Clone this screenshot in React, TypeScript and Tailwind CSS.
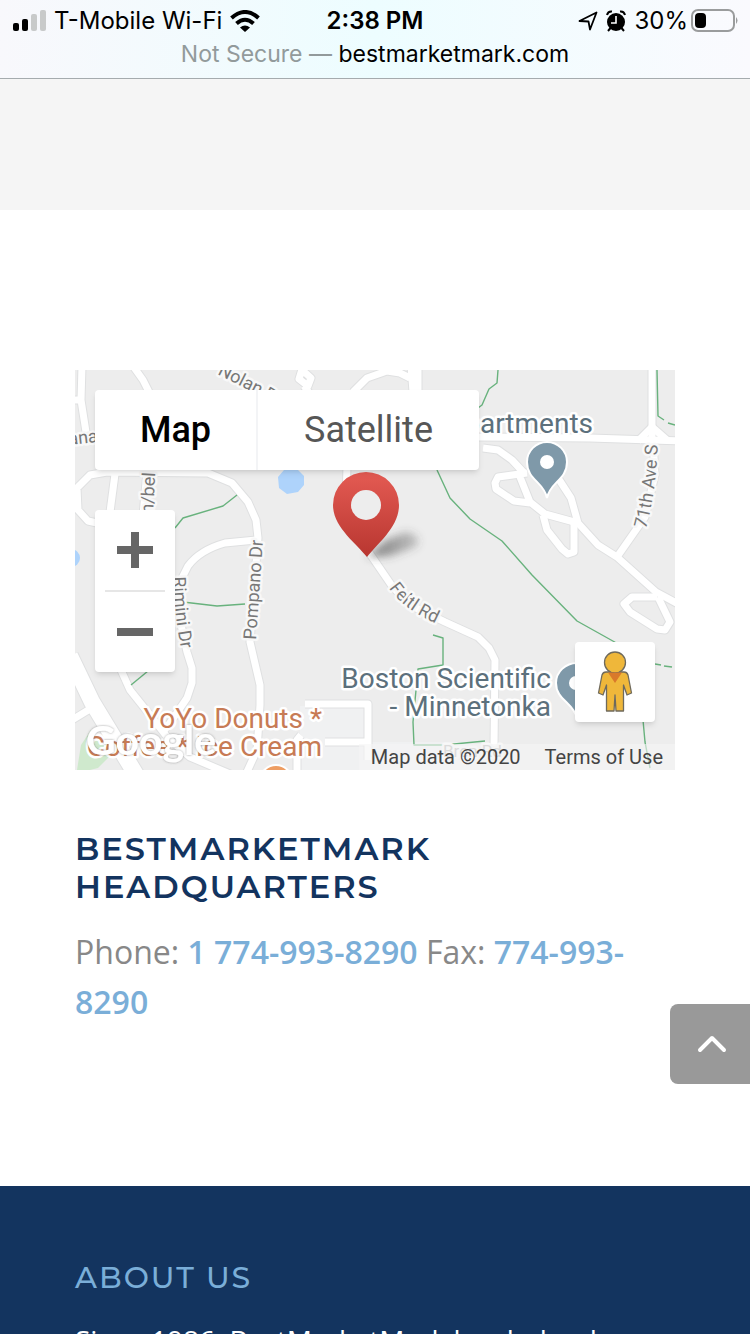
import React from 'react';
import { ChevronUp } from 'lucide-react';

const roads = [
  'M82 366 L81 400 L86 432',
  'M72 400 H81',
  'M133 366 L143 380 L150 394',
  'M110 512 L115 474',
  'M97 523 L88 521 L78 510 L77 488 L90 475 L107 472 L208 473 L232 483 L248 502 L256 520 L258 538 L250 642 L260 685 L260 705 L257 750 L246 774',
  'M257 540 L225 543 Q200 550 188 566 L178 586 L180 620 L187 652 L192 668 L192 683 L187 698 L172 720 L163 732',
  'M112 650 L130 690 L150 715 L168 738 L190 757 L230 774',
  'M72 720 L90 709',
  'M147 472 L143 515',
  'M303 366 L299 379 L308 386 L311 378 L302 370 M304 386 L310 394',
  'M353 392 L367 378 L387 371 L400 373 L410 378',
  'M411 366 L413 392 M418 366 V392',
  'M347 466 L346 500 L366 548 L392 586 L410 605 L445 622 L478 637 L489 648 L495 660 L494 746',
  'M476 437 L590 438 L680 441',
  'M652 366 V442',
  'M638 441 L652 427 L668 441',
  'M483 448 L498 450 L512 460 L525 474',
  'M527 473 L498 477 L495 483 L496 489 L514 501 L530 503 M520 477 L530 502 L545 514 L578 523',
  'M558 478 L571 498 L578 523 L598 545 L617 557 L656 592 L680 605',
  'M543 515 L547 530 L562 549 L568 554 L574 552 L574 523',
  'M617 557 L645 517 L655 475 L653 440',
  'M657 597 H632 L624 604 L630 612 L657 629 L665 630 L670 622 L658 597',
  'M305 704 H368 V742 H325 M368 742 V760',
  'M297 774 V740 L301 735',
];

const trails = [
  'M175 528 L183 518 L223 506 L237 495',
  'M183 602 L217 606 L245 604',
  'M131 685 L148 671',
  'M437 470 L450 498 L470 519 L502 541 L532 575 L577 621 L620 645',
  'M498 370 L497 383 L489 389 L482 405 L478 408',
  'M657 370 L658 416 L664 420 M668 423 L675 425',
  'M655 664 L661 665 M664 666 L672 667',
  'M643 720 L645 742 L650 768',
  'M433 635 L443 638 V665 L418 669 L413 722 L414 745 L444 745 L485 741',
];

function MapCanvas() {
  return (
    <svg
      viewBox="75 370 600 400"
      preserveAspectRatio="xMidYMid slice"
      className="block h-full w-full font-[Roboto,sans-serif]"
      role="img"
      aria-label="Map of Minnetonka"
    >
      <defs>
        <linearGradient id="pin" x1="0" y1="0" x2="0" y2="1">
          <stop offset="0" stopColor="#e45b53" />
          <stop offset="1" stopColor="#b83630" />
        </linearGradient>
        <linearGradient id="shade" x1="0" y1="0" x2="1" y2="0">
          <stop offset="0" stopColor="#444444" stopOpacity="0.7" />
          <stop offset="1" stopColor="#444444" stopOpacity="0.25" />
        </linearGradient>
        <filter id="soft" x="-50%" y="-50%" width="200%" height="200%">
          <feGaussianBlur stdDeviation="4" />
        </filter>
        <filter id="lift" x="-10%" y="-20%" width="120%" height="140%">
          <feDropShadow dx="0" dy="0" stdDeviation="1.2" floodColor="#555555" floodOpacity="0.6" />
        </filter>
        <path id="feltl" d="M389 588 Q403 610 442 626" />
        <path id="rimini" d="M173 577 Q174 613 183 660" />
        <path id="avenue" d="M646 529 Q657 487 658 438" />
      </defs>

      <rect x="75" y="370" width="600" height="400" fill="#ededed" />
      <path d="M300 706 H366 V742 H470 V770 H300Z" fill="#f0f1f2" />
      <path d="M77 770 L81 745 L91 730 L101 739 L109 757 L98 768 L90 770Z" fill="#cfe9cd" />
      <path d="M278 477 L284 470 H298 L304 476 L304 485 L298 492 L287 494 L279 488Z" fill="#aed3fb" />
      <circle cx="71" cy="558" r="9" fill="#aed3fb" />

      {/* Streets: casing first, then the white surface */}
      <g fill="none" strokeLinejoin="round">
        <g stroke="#dfe0e1">
          <path d="M70 656 L92 702 L112 735 L138 778" strokeWidth="18" />
          {roads.map((d) => (
            <path key={d} d={d} strokeWidth="9" />
          ))}
        </g>
        <g stroke="#ffffff">
          <path d="M70 656 L92 702 L112 735 L138 778" strokeWidth="16" />
          {roads.map((d) => (
            <path key={d} d={d} strokeWidth="7" />
          ))}
        </g>
        <g stroke="#68b27d" strokeWidth="1.4">
          {trails.map((d) => (
            <path key={d} d={d} />
          ))}
        </g>
      </g>

      {/* Street names */}
      <g
        fill="#777777"
        stroke="#f8f8f8"
        strokeWidth="5"
        strokeLinejoin="round"
        paintOrder="stroke"
        fontSize="18"
      >
        <text transform="translate(217 374) rotate(27)">Nolan Dr</text>
        <text transform="translate(69 445) rotate(-6)">ana</text>
        <text transform="translate(153 514) rotate(-87)">n/bel</text>
        <text transform="translate(256 640) rotate(-86)">Pompano Dr</text>
        <text>
          <textPath href="#rimini">Rimini Dr</textPath>
        </text>
        <text>
          <textPath href="#feltl">Feltl Rd</textPath>
        </text>
        <text>
          <textPath href="#avenue">71th Ave S</textPath>
        </text>
        <text x="443" y="757" fontSize="17" fill="#b4b4b4">
          Bren Rd
        </text>
      </g>

      <g fill="#7f99a9" stroke="#ffffff" strokeWidth="2">
        <path d="M547 498 C544 482 527 480 527 462 A20 20 0 0 1 567 462 C567 480 550 482 547 498Z" />
        <path d="M577 718 C573 702 556 700 556 683 A21 20 0 0 1 598 683 C598 700 581 702 577 718Z" />
      </g>
      <circle cx="547" cy="462" r="7" fill="#ffffff" />
      <circle cx="576" cy="683" r="7" fill="#ffffff" />

      {/* Places */}
      <g stroke="#ffffff" strokeWidth="5" strokeLinejoin="round" paintOrder="stroke" fontSize="28">
        <g fill="#5c707c" textAnchor="end">
          <text x="593" y="433">Apartments</text>
          <text x="551" y="688">Boston Scientific</text>
          <text x="551" y="716">- Minnetonka</text>
        </g>
        <g fill="#c77b55" textAnchor="end">
          <text x="322" y="728">YoYo Donuts *</text>
          <text x="322" y="756">Coffee * Ice Cream</text>
        </g>
      </g>
      <circle cx="276" cy="781" r="16" fill="#ee9d62" stroke="#ffffff" strokeWidth="2" />

      {/* Location marker */}
      <path d="M367 557 L386 540 L406 532 Q424 536 416 547 L390 556Z" fill="url(#shade)" filter="url(#soft)" />
      <path
        fill="url(#pin)"
        d="M367 557 C356 543 333 527 333 505 A33 33 0 0 1 399 505 C399 527 378 543 367 557Z"
      />
      <circle cx="366" cy="505" r="15" fill="#ededed" />

      <text
        x="86"
        y="755"
        fontSize="41"
        fill="#ffffff"
        filter="url(#lift)"
        className="font-[Lato,sans-serif] font-bold"
      >
        Google
      </text>
    </svg>
  );
}

function Pegman() {
  return (
    <svg width="36" height="62" viewBox="0 0 36 62" aria-hidden="true">
      <g fill="#efb73a" stroke="#6f6a5c" strokeWidth="1.3" strokeLinejoin="round">
        <path d="M9 21 H27 Q30 21 31 24 L34.500 42 L30 44 L26.500 34 V60 H19 L18 44 L17 60 H9.500 V34 L6 44 L1.500 42 L5 24 Q6 21 9 21Z" />
        <circle cx="18" cy="11.500" r="10.500" />
      </g>
      <path d="M11 21.500 H25 L18 32Z" fill="#d9792b" />
    </svg>
  );
}

function StatusBar() {
  return (
    <header className="border-b border-[#a5abae] bg-linear-to-r from-[#f8f8fc] via-[#edfdff] to-[#fafafe] font-[Inter,sans-serif] text-black">
      <div className="grid h-10 grid-cols-[1fr_auto_1fr] items-center px-3 pt-0.5 text-2xl leading-7">
        <div className="flex items-center gap-2">
          <svg width="34" height="22" viewBox="0 0 34 22" aria-hidden="true">
            <rect x="1" y="13" width="6" height="8" rx="2" />
            <rect x="10" y="9" width="6" height="12" rx="2" />
            <rect x="19" y="4" width="6" height="17" rx="2" fill="#c8caca" />
            <rect x="28" y="0" width="6" height="21" rx="2" fill="#c8caca" />
          </svg>
          <span>T-Mobile Wi-Fi</span>
          <svg width="30" height="22" viewBox="0 0 30 22" aria-hidden="true">
            <g fill="none" stroke="#000000" strokeWidth="4">
              <path d="M1.500 8 Q15 -4 28.500 8" />
              <path d="M6.500 13.500 Q15 6 23.500 13.500" />
            </g>
            <path d="M10 17.500 Q15 13.500 20 17.500 L15 22Z" />
          </svg>
        </div>
        <span className="font-semibold">2:38 PM</span>
        <div className="flex items-center justify-end gap-2">
          <svg width="20" height="20" viewBox="0 0 20 20" aria-hidden="true">
            <path d="M1.500 10 L18.500 1.500 L12 18.500 L10.500 10.500Z" fill="none" stroke="#000000" strokeWidth="1.800" strokeLinejoin="round" />
          </svg>
          <svg width="20" height="22" viewBox="0 0 20 22" aria-hidden="true">
            <circle cx="10" cy="12" r="9" />
            <path d="M1 5 Q2 1 6 1.500 M14 1.500 Q18 1 19 5 M4.500 18 L2 21 M15.500 18 L18 21" fill="none" stroke="#000000" strokeWidth="2" />
            <path d="M10 6 V13 H5" fill="none" stroke="#ffffff" strokeWidth="1.600" />
          </svg>
          <span className="flex items-center gap-0.5">
            30%
            <svg width="48" height="24" viewBox="0 0 48 24" aria-hidden="true">
              <rect x="2" y="1" width="42" height="21" rx="6" fill="none" stroke="#9a9c9d" strokeWidth="2" />
              <rect x="5" y="4" width="11" height="15" rx="4" />
              <path d="M46 8 Q49 11.500 46 15Z" fill="#9a9c9d" />
            </svg>
          </span>
        </div>
      </div>
      <p className="h-[38px] text-center text-[23px] leading-7">
        <span className="text-[#929a9b]">Not Secure — </span>
        bestmarketmark.com
      </p>
    </header>
  );
}

export default function App() {
  return (
    <div className="relative flex h-screen flex-col overflow-hidden bg-white font-['Open_Sans',sans-serif]">
      <StatusBar />
      <div className="h-[131px] shrink-0 bg-[#f5f5f5]" />

      <main className="shrink-0 px-[10%] pt-40 pb-[159px]">
        <section className="relative h-[400px] overflow-hidden font-[Roboto,sans-serif]" aria-label="Map">
          <MapCanvas />

          {/* Map type */}
          <div className="absolute top-5 left-5 flex h-20 rounded-sm bg-white text-4xl shadow-md">
            <button type="button" className="w-[163px] border-r-2 border-gray-100 font-medium text-black">
              Map
            </button>
            <button type="button" className="w-[221px] text-[#565656]">
              Satellite
            </button>
          </div>

          {/* Zoom */}
          <div className="absolute top-[140px] left-5 w-20 rounded-sm bg-white px-2.5 shadow-md">
            <button type="button" aria-label="Zoom in" className="flex h-20 w-full items-center justify-center">
              <svg width="36" height="36" viewBox="0 0 36 36" fill="#666666" aria-hidden="true">
                <path d="M14 0 H22 V14 H36 V22 H22 V36 H14 V22 H0 V14 H14Z" />
              </svg>
            </button>
            <button
              type="button"
              aria-label="Zoom out"
              className="flex h-[82px] w-full items-center justify-center border-t-2 border-[#e6e6e6]"
            >
              <svg width="36" height="8" viewBox="0 0 36 8" fill="#666666" aria-hidden="true">
                <path d="M0 0 H36 V8 H0Z" />
              </svg>
            </button>
          </div>

          <button
            type="button"
            aria-label="Street View"
            className="absolute right-5 bottom-12 flex size-20 items-center justify-center rounded-sm bg-white shadow-md"
          >
            <Pegman />
          </button>

          <div className="absolute right-0 bottom-0 flex h-[26px] items-center gap-6 bg-[#f5f5f5]/60 px-3 text-xl text-[#444444]">
            <span>Map data ©2020</span>
            <a href="#terms">Terms of Use</a>
          </div>
        </section>

        <h2 className="mt-[60px] font-[Montserrat,Inter,sans-serif] text-[32px] leading-[38px] font-semibold tracking-[2px] text-[#13345f]">
          BESTMARKETMARK HEADQUARTERS
        </h2>
        <p className="mt-[21px] text-[32px] leading-[50px] text-[#888888]">
          Phone:{' '}
          <a href="tel:17749938290" className="font-semibold text-[#7aaed8]">
            1 774-993-8290
          </a>{' '}
          Fax:{' '}
          <a href="tel:7749938290" className="font-semibold text-[#7aaed8]">
            774-993-8290
          </a>
        </p>
      </main>

      <footer className="flex-1 bg-[#13345f] px-[10%] pt-[73px]">
        <h3 className="font-[Montserrat,Inter,sans-serif] text-[30px] leading-[38px] font-medium tracking-[2px] text-[#7aaed8]">
          ABOUT US
        </h3>
        <p className="mt-[18px] text-[28px] leading-[50px] text-white">
          Since 1986, BestMarketMark has helped
        </p>
      </footer>

      <button
        type="button"
        aria-label="Back to top"
        className="fixed right-0 bottom-[250px] flex size-20 items-center justify-center rounded-l-lg bg-[#999999] pl-1 text-white"
      >
        <ChevronUp size={48} strokeWidth={2} />
      </button>
    </div>
  );
}
